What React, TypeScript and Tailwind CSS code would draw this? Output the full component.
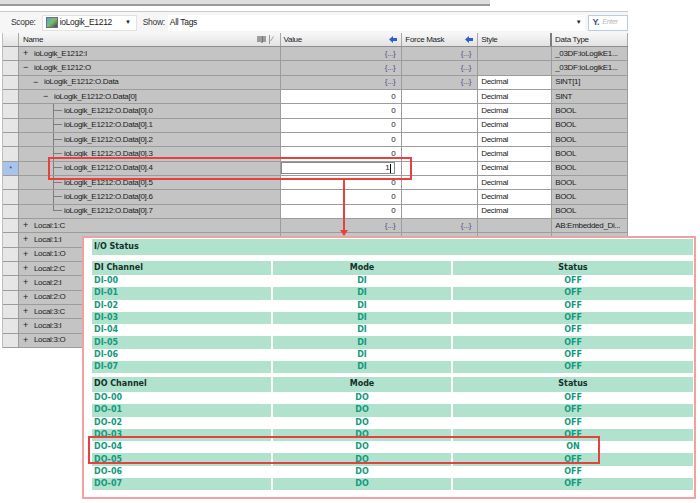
import React from 'react';

type Row = {
  lvl: number;
  sign?: '+' | '−';
  leaf?: boolean;
  last?: boolean;
  name: string;
  value: string;
  vWhite?: boolean;
  force: string;
  fWhite?: boolean;
  style: string;
  sWhite?: boolean;
  type: string;
  sel?: boolean;
};

const leaf = (n: number): Row => ({
  lvl: 3,
  leaf: true,
  last: n === 7,
  name: `ioLogik_E1212:O.Data[0].${n}`,
  value: n === 4 ? '1' : '0',
  vWhite: true,
  force: '',
  fWhite: true,
  style: 'Decimal',
  sWhite: true,
  type: 'BOOL',
  sel: n === 4,
});

// rows under the status panel only show their names
const local = (name: string, full = false): Row => ({
  lvl: 0,
  sign: '+',
  name,
  value: full ? '{...}' : '',
  force: full ? '{...}' : '',
  style: '',
  type: full ? 'AB:Embedded_Di...' : '',
});

const rows: Row[] = [
  { lvl: 0, sign: '+', name: 'ioLogik_E1212:I', value: '{...}', force: '{...}', style: '', type: '_03DF:ioLogikE1...' },
  { lvl: 0, sign: '−', name: 'ioLogik_E1212:O', value: '{...}', force: '{...}', style: '', type: '_03DF:ioLogikE1...' },
  { lvl: 1, sign: '−', name: 'ioLogik_E1212:O.Data', value: '{...}', force: '{...}', style: 'Decimal', sWhite: true, type: 'SINT[1]' },
  { lvl: 2, sign: '−', name: 'ioLogik_E1212:O.Data[0]', value: '0', vWhite: true, force: '', fWhite: true, style: 'Decimal', sWhite: true, type: 'SINT' },
  ...[0, 1, 2, 3, 4, 5, 6, 7].map(leaf),
  local('Local:1:C', true),
  local('Local:1:I'),
  local('Local:1:O'),
  local('Local:2:C'),
  local('Local:2:I'),
  local('Local:2:O'),
  local('Local:3:C'),
  local('Local:3:I'),
  local('Local:3:O'),
];

const cell = 'h-full border-r border-b border-[#9c9c9c] flex items-center overflow-hidden whitespace-nowrap';

const BlueArrow = () => (
  <svg width="8" height="7" viewBox="0 0 8 7">
    <path d="M0 3.5 L4 0 L4 2 L8 2 L8 5 L4 5 L4 7 Z" fill="#2c5fd0" />
  </svg>
);

const GridRow = ({ r }: { r: Row }) => (
  <div className="flex h-[14.33px]">
    <div className={`w-[16px] h-full border-r border-b border-[#9c9c9c] flex items-center justify-center ${r.sel ? 'bg-[#a9c4ea]' : 'bg-[#e6e6e6]'}`}>
      {r.sel && <span className="text-[7px] leading-none text-[#33478a]">*</span>}
    </div>
    <div className={`${cell} w-[262px] bg-[#c4c4c4]`}>
      {r.leaf ? (
        <>
          <div className="w-[34px] shrink-0" />
          <div className="w-[9px] h-full shrink-0 flex flex-col">
            <div className="h-1/2 border-l border-b border-[#7d7d7d]" />
            <div className={`h-1/2 ${r.last ? '' : 'border-l border-[#7d7d7d]'}`} />
          </div>
          <span className="ml-[2px]">{r.name}</span>
        </>
      ) : (
        <>
          <div className="shrink-0" style={{ width: 4 + r.lvl * 10 }} />
          <span className="w-[11px] shrink-0 text-[9px] leading-none">{r.sign}</span>
          <span>{r.name}</span>
        </>
      )}
    </div>
    <div className={`${cell} w-[122px] justify-end pr-[6px] ${r.vWhite ? 'bg-white' : 'bg-[#c4c4c4]'}`}>
      {r.sel ? (
        <div className="w-[116px] h-[12px] border border-[#8a8a8a] bg-white flex items-center justify-end pr-[3px]">
          <span>1</span>
          <span className="w-px h-[9px] bg-black ml-px" />
        </div>
      ) : (
        <span className={r.value === '{...}' ? 'text-[#4f4f8c]' : ''}>{r.value}</span>
      )}
    </div>
    <div className={`${cell} w-[76px] justify-end pr-[6px] ${r.fWhite ? 'bg-white' : 'bg-[#c4c4c4]'}`}>
      <span className="text-[#4f4f8c]">{r.force}</span>
    </div>
    <div className={`${cell} w-[74px] pl-[3px] ${r.sWhite ? 'bg-white' : 'bg-[#c4c4c4]'}`}>{r.style}</div>
    <div className={`${cell} w-[76px] pl-[3px] bg-[#c4c4c4]`}>{r.type}</div>
  </div>
);

const di = ['DI-00', 'DI-01', 'DI-02', 'DI-03', 'DI-04', 'DI-05', 'DI-06', 'DI-07'];
const dox = ['DO-00', 'DO-01', 'DO-02', 'DO-03', 'DO-04', 'DO-05', 'DO-06', 'DO-07'];

const mint = 'bg-[#b0e2ce]';

const IoRow = ({ ch, mode, status, alt }: { ch: string; mode: string; status: string; alt: boolean }) => (
  <div className="flex gap-[2px] h-[12.3px] text-[8px] font-bold text-[#129a7c] leading-none">
    <div className={`w-[179px] flex items-center pl-[2px] ${alt ? mint : 'bg-white'}`}>{ch}</div>
    <div className={`w-[178px] flex items-center justify-center ${alt ? mint : 'bg-white'}`}>{mode}</div>
    <div className={`w-[240px] flex items-center justify-center ${alt ? mint : 'bg-white'}`}>{status}</div>
  </div>
);

const IoHead = ({ title, h }: { title: string; h: string }) => (
  <div className={`flex gap-[2px] ${h} text-[8px] font-bold text-[#16302b] leading-none`}>
    <div className={`w-[179px] flex items-center pl-[2px] ${mint}`}>{title}</div>
    <div className={`w-[178px] flex items-center justify-center ${mint}`}>Mode</div>
    <div className={`w-[240px] flex items-center justify-center ${mint}`}>Status</div>
  </div>
);

export default function App() {
  return (
    <div className="relative w-[700px] h-[503px] bg-white overflow-hidden font-['Liberation_Sans',Arial,sans-serif] text-[8px] tracking-[-0.3px] text-[#1b1b1b]">
      {/* top strip */}
      <div className="h-[4px] w-[490px] bg-[#dedede]" />
      <div className="h-[2px] w-[490px] bg-[#9a9a9a]" />
      <div className="h-[5px]" />
      <div className="w-[628px] h-px bg-[#c9c9c9]" />

      {/* toolbar */}
      <div className="w-[628px] h-[21px] bg-[#f6f6f6] flex items-center text-[8.5px]">
        <span className="ml-[11px] text-[#333]">Scope:</span>
        <div className="ml-[6px] w-[96px] h-[16px] bg-white border border-[#e2e2e2] flex items-center">
          <div className="ml-[3px] w-[12px] h-[11px] border border-[#6c6c8c] bg-gradient-to-br from-[#5aa0d8] via-[#7fbf5a] to-[#445]" />
          <span className="ml-[2px]">ioLogik_E1212</span>
          <span className="ml-auto mr-[5px] text-[6px]">▼</span>
        </div>
        <span className="ml-[6px] text-[#333]">Show:</span>
        <div className="ml-[3px] w-[422px] h-[16px] bg-white flex items-center pl-[2px]">
          <span>All Tags</span>
          <span className="ml-auto mr-[4px] text-[6px]">▼</span>
        </div>
        <div className="ml-[3px] w-[40px] h-[16px] bg-white border border-[#b9cde0] flex items-center">
          <span className="ml-[3px] font-bold text-[#3d4f7a] text-[9px]">Y.</span>
          <span className="ml-[3px] italic text-[#b8b8b8] text-[7px]">Enter</span>
        </div>
      </div>

      {/* grid */}
      <div className="ml-[2px] w-[626px] border-l border-[#bdbdbd]">
        <div className="flex h-[14px] bg-gradient-to-b from-[#f7f7f7] to-[#e2e2e2] border-b border-[#8e8e8e] text-[8px]">
          <div className="w-[16px] border-r border-[#a8a8a8]" />
          <div className="w-[262px] border-r border-[#a8a8a8] flex items-center pl-[4px]">
            <span>Name</span>
            <span className="ml-auto mr-[7px] flex items-center gap-[2px]">
              <svg width="10" height="7" viewBox="0 0 10 7">
                <path d="M0 1h4M0 3h4M0 5h4M5 0v7M5 1h4M5 3h4M5 5h4" stroke="#4d4d4d" strokeWidth="1" />
              </svg>
              <span className="w-px h-[9px] bg-[#999]" />
              <span className="text-[7px] text-[#555]">∕</span>
            </span>
          </div>
          <div className="w-[122px] border-r border-[#a8a8a8] flex items-center pl-[3px]">
            <span>Value</span>
            <span className="ml-auto mr-[4px]"><BlueArrow /></span>
          </div>
          <div className="w-[76px] border-r border-[#a8a8a8] flex items-center pl-[3px]">
            <span>Force Mask</span>
            <span className="ml-auto mr-[4px]"><BlueArrow /></span>
          </div>
          <div className="w-[74px] border-r-2 border-[#7c7c7c] flex items-center pl-[3px]">Style</div>
          <div className="w-[76px] border-r border-[#a8a8a8] flex items-center pl-[3px]">Data Type</div>
        </div>
        {rows.map((r, i) => (
          <GridRow key={i} r={r} />
        ))}
      </div>

      {/* highlight on edited tag */}
      <div className="absolute left-[48px] top-[157px] w-[364px] h-[23px] border-2 border-[#e8403c]" />
      <div className="absolute left-[343px] top-[180px] w-[2px] h-[52px] bg-[#e8403c]" />
      <div className="absolute left-[340px] top-[230px] w-0 h-0 border-l-[4px] border-r-[4px] border-t-[6px] border-l-transparent border-r-transparent border-t-[#e8403c]" />

      {/* I/O status panel */}
      <div className="absolute left-[82px] top-[236px] w-[614px] h-[263px] border-2 border-[#f2a0a0] bg-white pl-[8px] pr-[1px] pt-[1px] font-['DejaVu_Sans',Verdana,sans-serif] tracking-normal">
        <div className={`h-[16px] ${mint} flex items-center pl-[2px] text-[8px] font-bold text-[#16302b]`}>I/O Status</div>
        <div className="h-[6px]" />
        <IoHead title="DI Channel" h="h-[14px]" />
        {di.map((c, i) => (
          <IoRow key={c} ch={c} mode="DI" status="OFF" alt={i % 2 === 1} />
        ))}
        <div className="h-[3.6px]" />
        <IoHead title="DO Channel" h="h-[15px]" />
        {dox.map((c, i) => (
          <IoRow key={c} ch={c} mode="DO" status={i === 4 ? 'ON' : 'OFF'} alt={i % 2 === 1} />
        ))}
      </div>

      <div className="absolute left-[88px] top-[436px] w-[512px] h-[28px] border-2 border-[#e8403c]" />
    </div>
  );
}
